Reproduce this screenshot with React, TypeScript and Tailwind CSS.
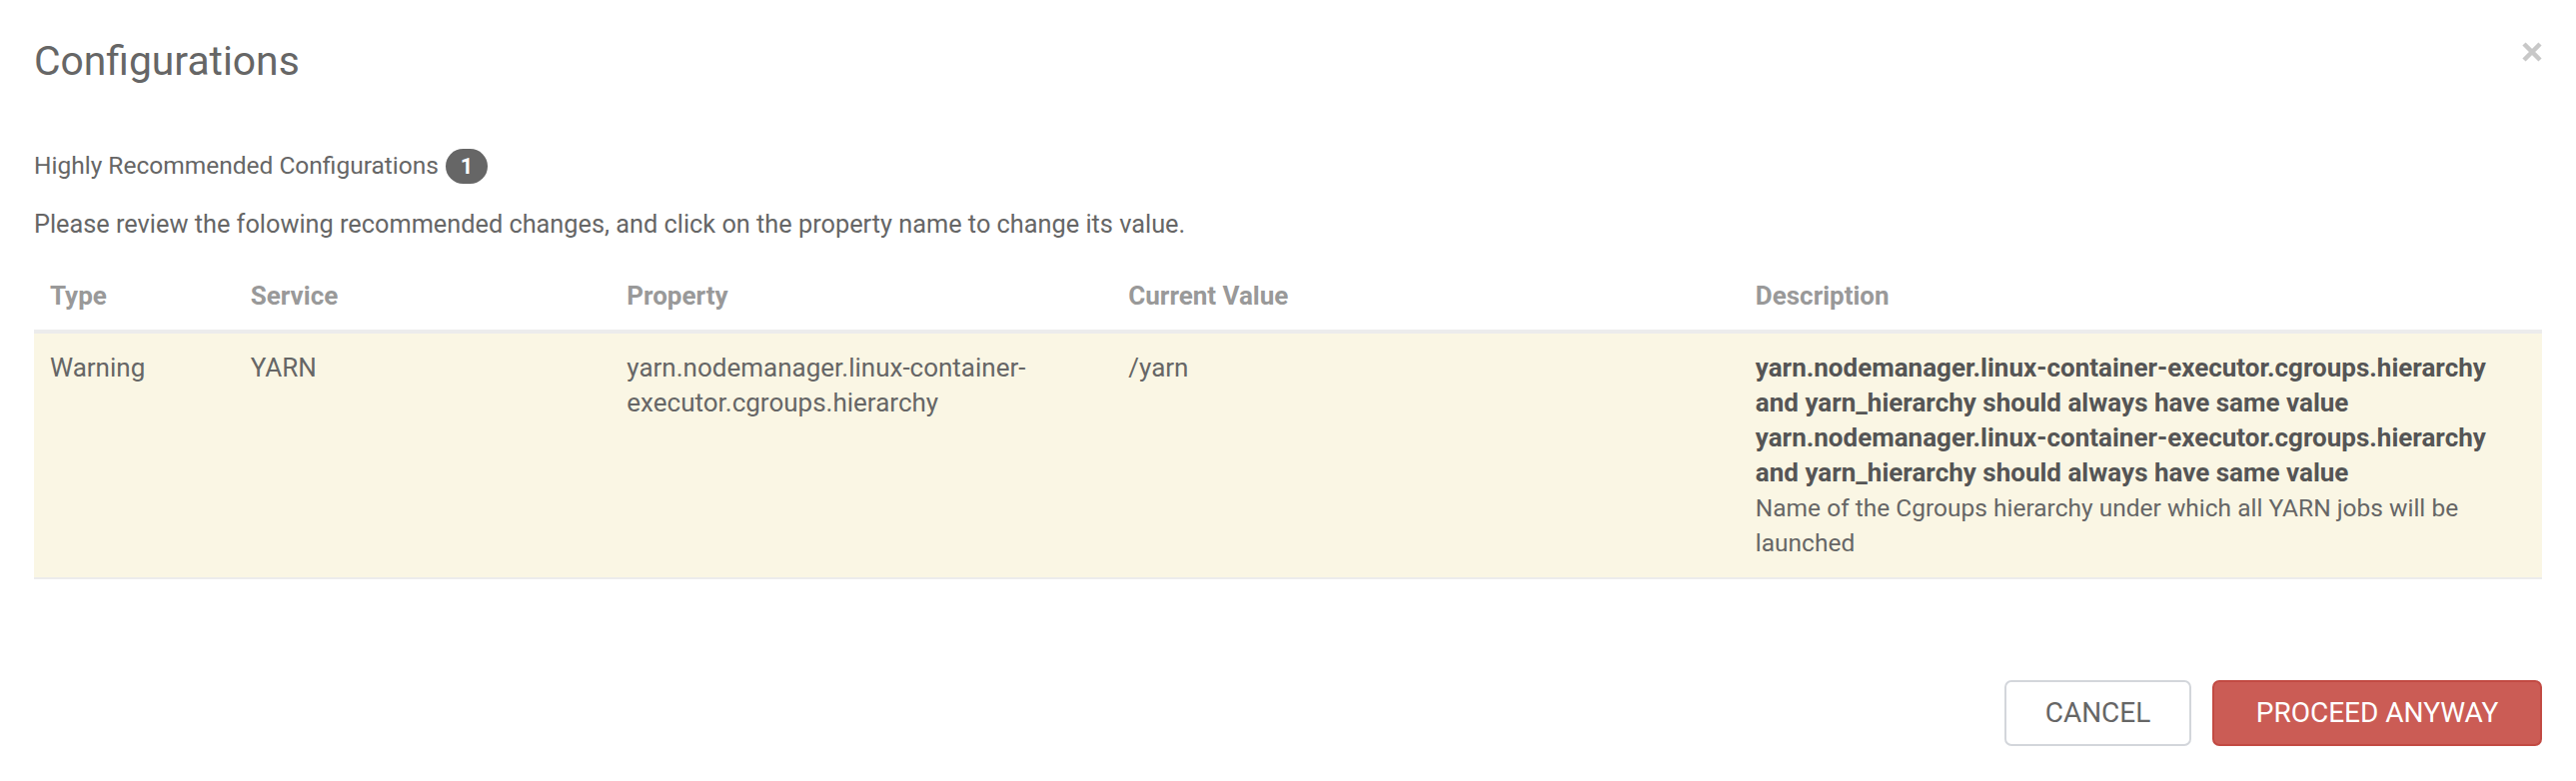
import React from "react";

type Rec = {
  type: string;
  service: string;
  property: string;
  value: string;
  messages: string[];
  description: string;
};

const recs: Rec[] = [
  {
    type: "Warning",
    service: "YARN",
    property: "yarn.nodemanager.linux-container-executor.cgroups.hierarchy",
    value: "/yarn",
    messages: [
      "yarn.nodemanager.linux-container-executor.cgroups.hierarchy and yarn_hierarchy should always have same value",
      "yarn.nodemanager.linux-container-executor.cgroups.hierarchy and yarn_hierarchy should always have same value",
    ],
    description: "Name of the Cgroups hierarchy under which all YARN jobs will be launched",
  },
];

export default function App() {
  return (
    <div className="min-h-screen w-full bg-white px-[34px] pt-[39px] font-['Roboto',_'Liberation_Sans',_sans-serif] text-[#666]">
      {/* header */}
      <div className="flex items-start justify-between">
        <h1 className="text-[40.8px] leading-[44px] font-normal text-[#666]">Configurations</h1>
        <button type="button" aria-label="Close" className="mt-[3px] text-[#c8c8c8]">
          <svg width="20" height="20" viewBox="0 0 20 20">
            <path d="M2 2 L18 18 M18 2 L2 18" stroke="currentColor" strokeWidth="4.5" />
          </svg>
        </button>
      </div>

      <div className="mt-[66px] flex h-[35px] items-center text-[24.5px]">
        <span>Highly Recommended Configurations</span>
        <span className="ml-[7px] flex h-[35px] w-[42px] items-center justify-center rounded-full bg-[#666] text-[22px] font-bold text-white">
          1
        </span>
      </div>
      <p className="mt-[24px] text-[25.3px] leading-[34px]">
        Please review the folowing recommended changes, and click on the property name to change its value.
      </p>

      {/* table */}
      <table className="mt-[20px] w-full table-fixed border-collapse text-left text-[26px] leading-[35px]">
        <colgroup>
          <col className="w-[8%]" />
          <col className="w-[15%]" />
          <col className="w-[20%]" />
          <col className="w-[25%]" />
          <col className="w-[32%]" />
        </colgroup>
        <thead>
          <tr className="border-b-4 border-[#ececec] text-[#999]">
            {["Type", "Service", "Property", "Current Value", "Description"].map((h) => (
              <th key={h} className="px-4 pt-[17px] pb-[16px] align-top font-bold">
                {h}
              </th>
            ))}
          </tr>
        </thead>
        <tbody>
          {recs.map((r, i) => (
            <tr key={i} className="border-b-2 border-[#ececec] bg-[#faf6e4]">
              <td className="px-4 py-[17px] align-top">{r.type}</td>
              <td className="px-4 py-[17px] align-top">{r.service}</td>
              <td className="px-4 py-[17px] align-top">
                <a className="cursor-pointer">{r.property}</a>
              </td>
              <td className="px-4 py-[17px] align-top">{r.value}</td>
              <td className="px-4 py-[17px] align-top">
                {r.messages.map((m, j) => (
                  <div key={j} className="font-bold text-[#555]">
                    {m}
                  </div>
                ))}
                <div className="text-[24.5px]">{r.description}</div>
              </td>
            </tr>
          ))}
        </tbody>
      </table>

      {/* footer */}
      <div className="mt-[101px] flex justify-end gap-[21px]">
        <button
          type="button"
          className="h-[66px] w-[187px] rounded-[7px] border-2 border-[#d3d6db] bg-white text-[28px] text-[#666]"
        >
          CANCEL
        </button>
        <button
          type="button"
          className="h-[66px] w-[330px] rounded-[7px] border-2 border-[#c24a43] bg-[#cb5c55] text-[28px] text-white"
        >
          PROCEED ANYWAY
        </button>
      </div>
    </div>
  );
}
